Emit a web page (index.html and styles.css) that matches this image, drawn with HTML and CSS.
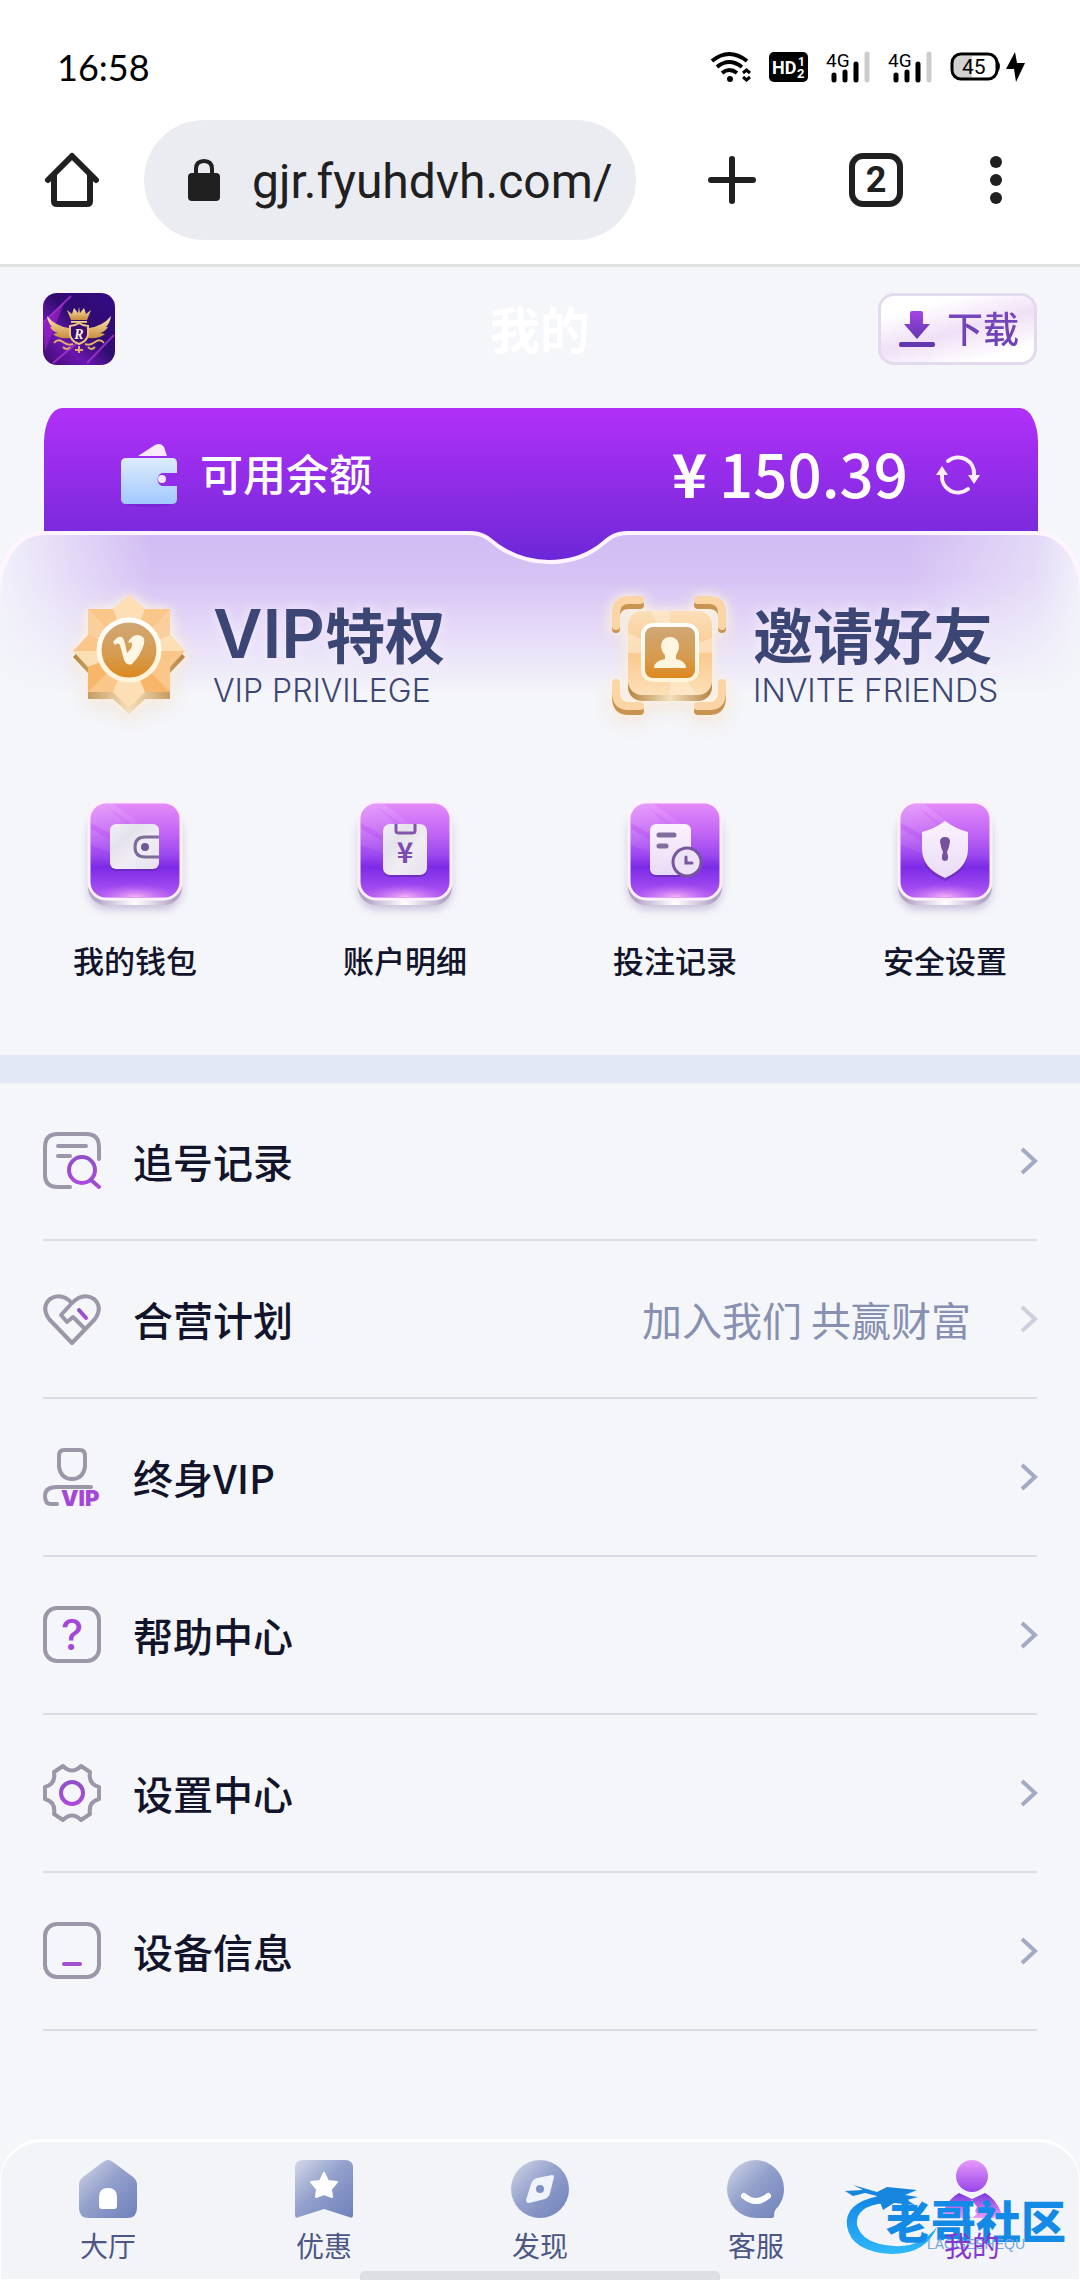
FILE: index.html
```html
<!DOCTYPE html>
<html lang="zh-CN">
<head>
<meta charset="utf-8">
<meta name="viewport" content="width=device-width, initial-scale=1">
<title>我的</title>
<link rel="stylesheet" href="styles.css">
</head>
<body>
<svg class="defs" aria-hidden="true">
  <defs>
    <linearGradient id="tileFill" x1="0" y1="0" x2="0" y2="1">
      <stop offset="0" stop-color="#e58cfa"/><stop offset=".3" stop-color="#c468f5"/><stop offset=".55" stop-color="#9c48f0"/><stop offset=".67" stop-color="#7c2ae6"/><stop offset=".82" stop-color="#9440ee"/><stop offset="1" stop-color="#b55cf3"/>
    </linearGradient>
    <radialGradient id="tileGlow" cx=".5" cy="1" r=".5" gradientTransform="translate(0 .4) scale(1 .6)">
      <stop offset="0" stop-color="#f6b4f4"/><stop offset="1" stop-color="#c76df5" stop-opacity="0"/>
    </radialGradient>
    <linearGradient id="tileEdge"><stop offset=".08" stop-color="#b3a4c6"/><stop offset=".5" stop-color="#fff"/><stop offset=".92" stop-color="#b3a4c6"/></linearGradient>
    <linearGradient id="tileSheen" x1="0" y1="0" x2="1" y2="1"><stop offset="0" stop-color="#fff" stop-opacity=".3"/><stop offset=".6" stop-color="#fff" stop-opacity="0"/></linearGradient>
    <linearGradient id="glyphFill" x1="0" y1="0" x2="1" y2="1"><stop offset="0" stop-color="#f1effa"/><stop offset=".3" stop-color="#e4e2ea"/><stop offset=".6" stop-color="#f1edf4"/><stop offset="1" stop-color="#e4dfec"/></linearGradient>
    <linearGradient id="glyphSoft" x1="0" y1="0" x2="0" y2="1"><stop offset="0" stop-color="#fbf2fd"/><stop offset="1" stop-color="#e9dbf5"/></linearGradient>
    <filter id="soft" x="-30%" y="-30%" width="160%" height="160%"><feGaussianBlur stdDeviation="5"/></filter>
    <g id="tile">
      <rect x="9" y="20" width="92" height="96" rx="18" fill="#9481b8" opacity=".5" filter="url(#soft)"/>
      <rect x="8" y="14" width="94" height="98" rx="18" fill="url(#tileEdge)"/>
      <rect x="9" y="9" width="92" height="97" rx="17" fill="url(#tileFill)" stroke="#fff0fd" stroke-width="3"/>
      <path d="M11 25 Q11 11 25 11 H34 L100 60 V66 L24 11 L100 80 L11 30Z M11 36 L90 82 L11 52Z" fill="url(#tileSheen)" opacity=".6"/>
      <rect x="11" y="60" width="88" height="44" rx="15" fill="url(#tileGlow)"/>
    </g>
    <linearGradient id="line" x1="0" y1="0" x2="0" y2="1"><stop offset="0" stop-color="#9150c8"/><stop offset="1" stop-color="#ad49dd"/></linearGradient>
    <linearGradient id="tab" x1="0" y1="0" x2="1" y2="1"><stop offset="0" stop-color="#d4d8e8"/><stop offset=".45" stop-color="#94a1cc"/><stop offset="1" stop-color="#6d80ba"/></linearGradient>
    <linearGradient id="head" x1="0" y1="0" x2="0" y2="1"><stop offset="0" stop-color="#e69af9"/><stop offset="1" stop-color="#9945ec"/></linearGradient>
    <linearGradient id="bodyFill" x1="0" y1="0" x2="0" y2="1"><stop offset="0" stop-color="#7a35df"/><stop offset="1" stop-color="#ee9bf5"/></linearGradient>
    <linearGradient id="gold" x1="0" y1="0" x2="0" y2="1"><stop offset="0" stop-color="#fbdfb8"/><stop offset=".5" stop-color="#fac98e"/><stop offset="1" stop-color="#fde0b8"/></linearGradient>
    <linearGradient id="goldDeep" x1="0" y1="0" x2="0" y2="1"><stop offset="0" stop-color="#cfa878"/><stop offset=".6" stop-color="#d69b4e"/><stop offset="1" stop-color="#de8619"/></linearGradient>
    <linearGradient id="goldSide"><stop offset="0" stop-color="#b5833f"/><stop offset=".5" stop-color="#f3dfbd"/><stop offset="1" stop-color="#b5833f"/></linearGradient>
    <linearGradient id="ring" x1="0" y1="0" x2="0" y2="1"><stop offset="0" stop-color="#fff"/><stop offset="1" stop-color="#fff3d8"/></linearGradient>
  </defs>
</svg>

<header class="browser">
  <div class="status">
    <time>16:58</time>
    <div class="status-icons">
      <svg width="40" height="30" viewBox="0 0 40 30" fill="none" stroke="#000" stroke-width="4"><path d="M1 9 Q18 -5 36 9 M6 15 Q18 5 31 15 M11 21 Q18 15 26 21"/><circle cx="19" cy="27" r="3" fill="#000" stroke="none"/><path d="M32 21 l3.500-3 3.500 3 M32 25 l3.500 3 3.500-3" stroke-width="3"/></svg>
      <svg width="39" height="30" viewBox="0 0 39 30"><rect width="39" height="30" rx="5"/><g fill="#fff" font-family="Roboto, sans-serif" font-weight="700"><text x="3" y="22" font-size="18">HD</text><text x="29" y="14" font-size="12">1</text><text x="28" y="26" font-size="13">2</text></g></svg>
      <svg width="44" height="30" viewBox="0 0 44 30"><text x="0" y="15" font-size="19" font-family="Roboto, sans-serif">4G</text><path d="M8 23v5 M19 20v8 M30 12v16" stroke="#000" stroke-width="5" stroke-linecap="round"/><path d="M41 2v26" stroke="#ccc" stroke-width="5" stroke-linecap="round"/></svg>
      <svg width="44" height="30" viewBox="0 0 44 30"><text x="0" y="15" font-size="19" font-family="Roboto, sans-serif">4G</text><path d="M8 23v5 M19 20v8 M30 12v16" stroke="#000" stroke-width="5" stroke-linecap="round"/><path d="M41 2v26" stroke="#ccc" stroke-width="5" stroke-linecap="round"/></svg>
      <svg width="75" height="30" viewBox="0 0 75 30"><path d="M22 4 H10 Q3 4 3 14 Q3 26 10 26 H22Z" fill="#d2d2d2"/><rect x="2" y="2" width="45" height="25" rx="9" fill="none" stroke="#000" stroke-width="3"/><path d="M48 9 Q52 14 48 20Z"/><text x="12" y="22" font-size="21" font-family="Roboto, sans-serif">45</text><path d="M65 0 L56 17 H64 L66 30 L75 11 H67Z"/></svg>
    </div>
  </div>
  <div class="toolbar">
    <button class="tool" aria-label="主页"><svg width="54" height="54" viewBox="0 0 54 54" fill="none" stroke="#202020" stroke-width="6" stroke-linecap="round" stroke-linejoin="round"><path d="M3 27 L27 3 L51 27 M9 22 V48 Q9 51 12 51 H42 Q45 51 45 48 V22"/></svg></button>
    <label class="address">
      <svg width="32" height="42" viewBox="0 0 32 42"><rect y="14" width="32" height="28" rx="4" fill="#202020"/><path d="M8 16 V10 Q8 2 16 2 T24 10 V16" fill="none" stroke="#202020" stroke-width="4"/></svg>
      <input type="text" value="gjr.fyuhdvh.com/" aria-label="网址">
    </label>
    <button class="tool tool-new" aria-label="新标签页"><svg width="54" height="54" viewBox="0 0 54 54" stroke="#202020" stroke-width="6" stroke-linecap="round"><path d="M27 6V48 M6 27H48"/></svg></button>
    <button class="tool tool-tabs" aria-label="标签页">2</button>
    <button class="tool tool-menu" aria-label="菜单"><svg width="54" height="54" viewBox="0 0 54 54" fill="#202020"><circle cx="27" cy="9" r="6"/><circle cx="27" cy="27" r="6"/><circle cx="27" cy="45" r="6"/></svg></button>
  </div>
</header>

<main>
  <div class="heading">
    <a href="#" class="logo" aria-label="首页">
      <svg width="72" height="72" viewBox="0 0 72 72">
        <defs><linearGradient id="lg" x1="0" y1="1" x2="1" y2="0"><stop offset="0" stop-color="#3d0a6b"/><stop offset=".3" stop-color="#6b16b0"/><stop offset=".55" stop-color="#2f0c6e"/><stop offset="1" stop-color="#340a86"/></linearGradient><linearGradient id="au" x1="0" y1="0" x2="0" y2="1"><stop offset="0" stop-color="#fdeab5"/><stop offset="1" stop-color="#c98d3d"/></linearGradient></defs>
        <rect width="72" height="72" rx="14" fill="url(#lg)"/>
        <path d="M0 30 L28 3 M10 70 L34 50 M44 70 L71 42" stroke="#b33be0" stroke-width="2" opacity=".7"/><path d="M0 32 L22 8 L2 58Z" fill="#c22bdd" opacity=".45"/>
        <g fill="url(#au)"><path d="M24 17 l5 4 2-6 4 5 1-6 1 6 4-5 2 6 5-4 -4 10 H28Z"/><path d="M28 28h16v2H28Z"/><path d="M26 35 Q12 33 4 23 Q5 30 9 34 L7 34 Q10 39 15 40 L10 41 Q15 46 27 45Z M46 35 Q60 33 68 23 Q67 30 63 34 L65 34 Q62 39 57 40 L62 41 Q57 46 45 45Z"/></g>
        <path d="M27 33 Q32 33 36 30 Q40 33 45 33 V42 Q44 48 36 51 Q28 48 27 42Z" fill="#3b0b78" stroke="#edc780" stroke-width="2"/>
        <text x="36" y="46" text-anchor="middle" font-family="'Liberation Serif', serif" font-style="italic" font-weight="700" font-size="14" fill="#fff2d2">R</text>
        <path d="M11 50 Q15 45 20 49 T30 51 M61 50 Q57 45 52 49 T42 51 M20 54 Q24 58 27 54 M52 54 Q48 58 45 54 M36 53 V60 M32 57 H40" fill="none" stroke="#e0b06a" stroke-width="2"/>
      </svg>
    </a>
    <h1>我的</h1>
    <button class="download">
      <svg width="36" height="36" viewBox="0 0 36 36"><defs><linearGradient id="dl" x1="0" y1="0" x2="0" y2="1"><stop offset="0" stop-color="#a643e6"/><stop offset="1" stop-color="#6138b0"/></linearGradient></defs><path d="M13 0 H22 Q24 0 24 2 V13 H31 L18 28 L5 13 H11 V2 Q11 0 13 0Z" fill="url(#dl)"/><rect y="31" width="36" height="5" rx="2" fill="#6138b0"/></svg>
      <span>下载</span>
    </button>
  </div>

  <section class="balance">
    <svg width="58" height="64" viewBox="0 0 58 64"><defs><linearGradient id="wl" x1="0" y1="0" x2="0" y2="1"><stop offset="0" stop-color="#dcebfb"/><stop offset="1" stop-color="#a1c9ff"/></linearGradient></defs><ellipse cx="29" cy="60" rx="25" ry="4" fill="#641fc0" opacity=".4"/><path d="M18 13 L35 2 Q41 -1 44 4 L47 13Z" fill="#fbe9fb"/><path d="M6 15 H52 Q57 15 57 20 V30 H42 A7 7 0 0 0 42 43 H57 V56 Q57 61 52 61 H6 Q1 61 1 56 V20 Q1 15 6 15Z" fill="url(#wl)"/><circle cx="42" cy="36" r="4" fill="#f4eaff"/></svg>
    <span class="balance-label">可用余额</span>
    <strong class="amount"><span class="currency">¥</span><span>150.39</span></strong>
    <button class="refresh" aria-label="刷新余额"><svg width="44" height="40" viewBox="0 0 44 40" fill="none" stroke="#fff0fb" stroke-width="4" stroke-linecap="round"><path d="M12 6 A16 16 0 0 1 38 20"/><path d="M32 34 A16 16 0 0 1 6 20"/><path d="M32 20 H44 L38 29Z M0 20 H12 L6 11Z" fill="#fff0fb" stroke="none"/></svg></button>
  </section>

  <section class="perks">
    <svg class="perks-bg" viewBox="0 0 1080 220" preserveAspectRatio="none" aria-hidden="true">
      <defs>
        <linearGradient id="pv" x1="0" y1="0" x2="0" y2="220" gradientUnits="userSpaceOnUse"><stop offset="0" stop-color="#d1bbf3"/><stop offset=".22" stop-color="#d7c3f5"/><stop offset=".45" stop-color="#e5daf8"/><stop offset=".75" stop-color="#f5f6fa"/></linearGradient>
        <linearGradient id="ph"><stop offset="0" stop-color="#f4f6fa" stop-opacity=".9"/><stop offset=".04" stop-color="#f4f6fa" stop-opacity=".65"/><stop offset=".14" stop-color="#f4f6fa" stop-opacity="0"/><stop offset=".84" stop-color="#f4f6fa" stop-opacity="0"/><stop offset=".96" stop-color="#f4f6fa" stop-opacity=".5"/><stop offset="1" stop-color="#f4f6fa" stop-opacity=".9"/></linearGradient>
        <linearGradient id="ps" x1="0" y1="0" x2="0" y2="70" gradientUnits="userSpaceOnUse"><stop offset=".5" stop-color="#fff4ff"/><stop offset="1" stop-color="#fff" stop-opacity="0"/></linearGradient>
        <path id="card" d="M0 46 C6 20 22 2 44 2 H470 C486 2 490 10 501 17 C515 26 530 31 549 31 C568 31 584 26 597 17 C608 9 612 2 628 2 H1036 C1058 2 1074 20 1080 46 V220 H0Z"/>
      </defs>
      <use href="#card" fill="url(#pv)"/><use href="#card" fill="url(#ph)"/><use href="#card" fill="none" stroke="url(#ps)" stroke-width="4"/>
    </svg>
    <a href="#" class="perk">
      <svg width="116" height="124" viewBox="0 0 116 124">
        <path d="M58 9 74 23 99 23 99 48 114 64 99 80 99 106 74 106 58 121 42 106 17 106 17 80 2 64 17 48 17 23 42 23Z" fill="url(#goldSide)"/>
        <path d="M58 2 74 16 99 16 99 42 114 58 99 74 99 99 74 99 58 115 42 99 17 99 17 74 2 58 17 42 17 16 42 16Z" fill="#fac68a"/>
        <path d="M58 2 74 16 58 58 42 16Z M114 58 99 42 58 58Z M2 58 17 74 58 58Z M58 115 74 99 58 58 42 99Z" fill="#fddfb5"/>
        <path d="M99 16V42L58 58Z M17 16V42L58 58Z" fill="#fbcf9b"/>
        <path d="M17 99V74L58 58Z M99 99H74L58 58Z" fill="#f8b66a"/>
        <circle cx="58" cy="57" r="30" fill="url(#goldDeep)" stroke="url(#ring)" stroke-width="5"/>
        <path d="M42 49 Q48 41 52 45 Q54 49 56 60 Q62 54 61 51 Q61 48 57 50 Q60 42 67 42 Q75 43 73 51 Q70 62 61 71 Q56 73 53 67 L49 52 Q47 49 44 52Z" fill="#fff6e3"/>
      </svg>
      <span class="perk-text"><b><span class="latin">VIP</span>特权</b><small>VIP PRIVILEGE</small></span>
    </a>
    <a href="#" class="perk">
      <svg width="116" height="124" viewBox="0 0 116 124">
        <g fill="none" stroke-width="8" stroke-linecap="round"><path d="M5 36 V24 Q5 12 18 12 H29 M111 36 V24 Q111 12 98 12 H87 M5 94 V104 Q5 118 18 118 H29 M111 94 V104 Q111 118 98 118 H87" stroke="#c89450"/><path d="M5 33 V20 Q5 7 18 7 H29 M111 33 V20 Q111 7 98 7 H87 M5 90 V99 Q5 113 18 113 H29 M111 90 V99 Q111 113 98 113 H87" stroke="#fcd5a6"/></g>
        <rect x="17" y="24" width="84" height="84" rx="14" fill="url(#goldSide)"/><rect x="17" y="18" width="84" height="84" rx="14" fill="url(#gold)"/>
        <path d="M59 60 L40 18 H59Z M59 60 L101 45 V60Z M59 60 V102 H85Z M59 60 H17 V40Z" fill="#fdebd2" opacity=".6"/>
        <rect x="32" y="32" width="54" height="55" rx="10" fill="url(#goldDeep)" stroke="url(#ring)" stroke-width="4"/>
        <path d="M59 44 C69 44 70 56 65 62 V66 Q75 68 75 75 H43 Q43 68 54 66 V62 C48 56 49 44 59 44Z" fill="#fff6e0"/>
      </svg>
      <span class="perk-text"><b>邀请好友</b><small>INVITE FRIENDS</small></span>
    </a>
  </section>

  <nav class="shortcuts">
    <a href="#"><svg width="110" height="130" viewBox="0 0 110 130"><use href="#tile"/><rect x="30" y="33" width="49" height="45" rx="6" fill="#5b2a9c" opacity=".6"/><rect x="30" y="31" width="49" height="45" rx="6" fill="url(#glyphFill)"/><path d="M79 44 H65 Q55 44 55 54 T65 64 H79" fill="none" stroke="#7e6b98" stroke-width="3"/><circle cx="65" cy="54" r="4" fill="#6f5793"/></svg><span>我的钱包</span></a>
    <a href="#"><svg width="110" height="130" viewBox="0 0 110 130"><use href="#tile"/><rect x="33" y="34" width="44" height="50" rx="7" fill="#5b2a9c" opacity=".6"/><rect x="33" y="31" width="44" height="51" rx="7" fill="url(#glyphFill)"/><path d="M46 31 V38 Q46 40 49 40 H62 Q65 40 65 38 V31" fill="none" stroke="#8355ad" stroke-width="3"/><text x="55" y="70" text-anchor="middle" font-family="'Noto Sans CJK SC', sans-serif" font-weight="700" font-size="28" fill="#7c4bb4">¥</text></svg><span>账户明细</span></a>
    <a href="#"><svg width="110" height="130" viewBox="0 0 110 130"><use href="#tile"/><rect x="30" y="33" width="41" height="51" rx="6" fill="#5b2a9c" opacity=".6"/><rect x="30" y="31" width="41" height="51" rx="6" fill="url(#glyphSoft)"/><path d="M39 42 H54 M39 53 H46" stroke="#826d9e" stroke-width="5" stroke-linecap="round"/><circle cx="67" cy="69" r="14" fill="#eee2f7" stroke="#78559f" stroke-width="3"/><path d="M66 64 V70 H72" fill="none" stroke="#78559f" stroke-width="3" stroke-linecap="round"/></svg><span>投注记录</span></a>
    <a href="#"><svg width="110" height="130" viewBox="0 0 110 130"><use href="#tile"/><path d="M55 31 Q66 39 78 42 V58 Q78 78 55 88 Q32 78 32 58 V42 Q44 39 55 31Z" fill="#5b2a9c" opacity=".5"/><path d="M55 28 Q66 36 78 39 V56 Q78 75 55 85 Q32 75 32 56 V39 Q44 36 55 28Z" fill="url(#glyphSoft)"/><path d="M55 44 Q60 44 60 49 Q59 55 57 59 Q60 68 55 68 T53 59 Q51 55 50 49 Q50 44 55 44Z" fill="#76529e"/></svg><span>安全设置</span></a>
  </nav>

  <ul class="menu">
    <li><a href="#"><svg class="icon" viewBox="0 0 58 58"><path d="M56 27 V15 Q56 2 43 2 H15 Q2 2 2 15 V43 Q2 55 15 55 H27 M15 14 H43 M15 24 H27"/><g class="accent"><circle cx="39" cy="38" r="13"/><path d="M48 48 L56 55"/></g></svg><span>追号记录</span><svg class="arrow" viewBox="0 0 18 28"><path d="M3 2 L16 14 L3 26"/></svg></a></li>
    <li><a href="#"><svg class="icon" viewBox="0 0 58 58"><path d="M29 53 L6 29 Q-2 17 7 9 Q18 2 29 13 Q40 2 51 9 Q60 17 52 29Z M29 13 L18 25 L24 32 L30 27 L41 38"/><path class="accent" d="M36 20 L43 28"/></svg><span>合营计划</span><em>加入我们 共赢财富</em><svg class="arrow arrow-pale" viewBox="0 0 18 28"><path d="M3 2 L16 14 L3 26"/></svg></a></li>
    <li><a href="#"><svg class="icon" viewBox="0 0 58 58"><path d="M21 2 H37 Q42 2 42 8 V19 Q40 31 29 31 T16 19 V8 Q16 2 21 2Z M48 39 H14 Q2 39 2 48 Q2 56 8 56 H14"/><text class="icon-text" x="18" y="58" font-size="22">VIP</text></svg><span>终身VIP</span><svg class="arrow" viewBox="0 0 18 28"><path d="M3 2 L16 14 L3 26"/></svg></a></li>
    <li><a href="#"><svg class="icon" viewBox="0 0 58 58"><rect x="2" y="2" width="54" height="53" rx="12"/><text class="icon-text mark" x="29" y="44" font-size="42" text-anchor="middle">?</text></svg><span>帮助中心</span><svg class="arrow" viewBox="0 0 18 28"><path d="M3 2 L16 14 L3 26"/></svg></a></li>
    <li><a href="#"><svg class="icon" viewBox="0 0 58 58"><path d="M20 2 Q29 11 38 2 L47 8 Q45 20 56 23 V35 Q45 38 47 50 L38 56 Q29 47 20 56 L11 50 Q13 38 2 35 V23 Q13 20 11 8Z"/><circle class="accent" cx="29" cy="29" r="11"/></svg><span>设置中心</span><svg class="arrow" viewBox="0 0 18 28"><path d="M3 2 L16 14 L3 26"/></svg></a></li>
    <li><a href="#"><svg class="icon" viewBox="0 0 58 58"><rect x="2" y="2" width="54" height="53" rx="12"/><path class="accent accent-flat" d="M21 42 H37"/></svg><span>设备信息</span><svg class="arrow" viewBox="0 0 18 28"><path d="M3 2 L16 14 L3 26"/></svg></a></li>
  </ul>
</main>

<nav class="tabs">
  <a href="#"><svg width="58" height="58" viewBox="0 0 58 58"><path d="M24 2 Q29 -2 34 2 L54 17 Q58 20 58 25 V48 Q58 58 48 58 H10 Q0 58 0 48 V25 Q0 20 4 17Z" fill="url(#tab)"/><path d="M20 37 Q20 28 29 28 T38 37 V46 Q38 49 35 49 H23 Q20 49 20 46Z" fill="#fff"/></svg><span>大厅</span></a>
  <a href="#"><svg width="58" height="58" viewBox="0 0 58 58"><path d="M8 0 H50 Q58 0 58 8 V55 Q58 59 54 57 L29 49 L4 57 Q0 59 0 55 V8 Q0 0 8 0Z" fill="url(#tab)"/><path d="M29 13 L33 21 L42 22 L36 29 L37 37 L29 34 L21 37 L22 29 L16 22 L25 21Z" fill="#fff" stroke="#fff" stroke-width="2" stroke-linejoin="round"/></svg><span>优惠</span></a>
  <a href="#"><svg width="58" height="58" viewBox="0 0 58 58"><circle cx="29" cy="29" r="29" fill="url(#tab)"/><path d="M26 18 L41 15 Q43 15 43 17 L39 33 Q38 37 34 39 L18 43 Q15 43 15 40 L20 24 Q22 19 26 18Z" fill="#f1f3fb"/><circle cx="29" cy="29" r="4" fill="#8090c2"/></svg><span>发现</span></a>
  <a href="#"><svg width="58" height="58" viewBox="0 0 58 58"><path d="M29 0 A29 29 0 0 1 49 49 Q47 51 47 57 L45 58 H29 A29 29 0 0 1 29 0Z" fill="url(#tab)"/><path d="M17 36 Q29 46 41 36" fill="none" stroke="#fff" stroke-width="6" stroke-linecap="round"/></svg><span>客服</span></a>
  <a href="#" class="current">
    <svg width="58" height="58" viewBox="0 0 58 58"><circle cx="29" cy="16" r="16" fill="url(#head)"/><path d="M0 52 Q6 38 16 33 L29 39 L42 33 Q52 38 58 52 Q55 58 48 58 H10 Q3 58 0 52Z" fill="url(#bodyFill)"/><path d="M29 40 L34 47 L32 51 L34 54 L29 58 L24 54 L27 50 L24 47Z" fill="#fff"/></svg>
    <div class="stamp">
      <svg width="94" height="74" viewBox="0 0 94 74" fill="none"><defs><linearGradient id="dr" x1="0" y1="0" x2="0" y2="1"><stop offset="0" stop-color="#1186e4"/><stop offset="1" stop-color="#2eb8fa"/></linearGradient></defs><path d="M34 13 Q-1 20 2 43 Q6 69 47 71 Q81 71 92 44 Q75 65 49 63 Q17 61 12 42 Q10 23 40 20Z" fill="url(#dr)"/><path d="M0 8 L18 7 L8 2 L32 9 L42 4 L72 7 L60 12 L73 14 L62 17 L70 22 L49 20 L38 27 L35 19 L28 22 L32 13 L20 10 L8 13Z" fill="#1685dd"/></svg>
      <div class="stamp-text"><strong>老哥社区</strong><small>LAOGESHEQU</small></div>
    </div>
    <span>我的</span>
  </a>
  <i class="handle"></i>
</nav>
</body>
</html>
```
FILE: styles.css
```css
* {
  box-sizing: border-box;
}

body {
  margin: 0;
  min-height: 100vh;
  display: flex;
  flex-direction: column;
  background: #f5f6fa;
  color: #11142a;
  font-family: "Noto Sans CJK SC", sans-serif;
  font-size: 40px;
}

a {
  color: inherit;
  text-decoration: none;
}

button {
  padding: 0;
  border: 0;
  background: none;
  color: inherit;
  font: inherit;
}

svg {
  display: block;
  flex: none;
  overflow: visible;
}

.defs {
  position: absolute;
  width: 0;
  height: 0;
}

/* Browser chrome */
.browser {
  background: #fff;
  border-bottom: 3px solid #e1e1e1;
}

.status {
  display: flex;
  justify-content: space-between;
  align-items: center;
  height: 120px;
  padding: 14px 55px 0 57px;
  color: #000;
  font: 36px/40px Lato, sans-serif;
}

.status-icons {
  display: flex;
  gap: 18px;
}

.toolbar {
  display: flex;
  align-items: center;
  padding: 0 57px 24px 45px;
}

.tool {
  flex: none;
  width: 54px;
  height: 54px;
}

.address {
  flex: 1;
  min-width: 0;
  display: flex;
  align-items: center;
  gap: 32px;
  height: 120px;
  margin-left: 45px;
  padding: 0 16px 0 44px;
  border-radius: 60px;
  background: #ebecf1;
}

.address input {
  flex: 1;
  min-width: 0;
  padding: 4px 0 0;
  border: 0;
  outline: 0;
  background: none;
  color: #202020;
  font: 48px/60px Roboto, sans-serif;
}

.tool-new {
  margin-left: 69px;
}

.tool-tabs {
  margin-left: 90px;
  border: 6px solid #202020;
  border-radius: 14px;
  color: #202020;
  font: 700 36px/42px Roboto, sans-serif;
}

.tool-menu {
  margin-left: 66px;
}

/* Page heading */
.heading {
  display: grid;
  grid-template-columns: 1fr auto 1fr;
  align-items: center;
  padding: 26px 43px 43px;
}

.logo {
  justify-self: start;
}

h1 {
  margin: 0;
  color: #fff;
  font-size: 50px;
  line-height: 68px;
  padding-bottom: 4px;
}

.download {
  justify-self: end;
  display: flex;
  align-items: center;
  gap: 12px;
  height: 72px;
  padding: 0 15px 0 18px;
  border: 3px solid #e4daee;
  border-radius: 16px;
  background: linear-gradient(165deg, #fff 20%, #f0e0f7 52%, #fff 85%);
  font-size: 36px;
  font-weight: 500;
  line-height: 54px;
}

.download span {
  padding-bottom: 4px;
  background: linear-gradient(#7a4ac0, #6a3fae);
  background-clip: text;
  color: transparent;
}

/* Balance */
.balance {
  display: flex;
  align-items: center;
  height: 162px;
  margin: 0 42px 0 44px;
  padding: 0 58px 28px 76px;
  border-radius: 18px 18px 0 0 / 34px 34px 0 0;
  background: linear-gradient(#b130f8, #7c2add 75%, #6426d6);
  color: #fff;
}

.balance-label {
  margin-left: 22px;
  padding-bottom: 6px;
  font-size: 43px;
  font-weight: 500;
  line-height: 60px;
}

.amount {
  display: flex;
  gap: 12px;
  margin-left: auto;
  padding-bottom: 6px;
  font-size: 60px;
  font-weight: 500;
  line-height: 80px;
}

.currency {
  font-weight: 700;
}

.refresh {
  margin-left: 28px;
}

/* VIP and invite card */
.perks {
  position: relative;
  display: grid;
  grid-template-columns: 1fr 1fr;
  height: 220px;
  margin-top: -39px;
}

.perks-bg {
  position: absolute;
  inset: 0;
  width: 100%;
  height: 100%;
}

.perk {
  position: relative;
  display: flex;
  align-items: flex-start;
  gap: 26px;
  padding: 62px 0 0 71px;
  color: #3b4674;
  white-space: nowrap;
}

.perk > svg {
  filter: drop-shadow(0 0 6px #fff6e8) drop-shadow(0 6px 8px #efe4da);
}

.perk-text {
  display: flex;
  flex-direction: column;
}

.perk-text b {
  display: flex;
  align-items: center;
  font-size: 60px;
  line-height: 80px;
  text-shadow: 0 0 12px #f8efff;
}

.perk-text .latin {
  font-family: Inter, sans-serif;
  font-size: 68px;
  font-weight: 600;
}

.perk-text small {
  font: 300 32px/36px Inter, sans-serif;
}

/* Shortcuts */
.shortcuts {
  display: grid;
  grid-template-columns: repeat(4, 1fr);
  padding: 42px 0 73px;
}

.shortcuts a {
  display: flex;
  flex-direction: column;
  align-items: center;
  gap: 15px;
  font-size: 31px;
  font-weight: 500;
  line-height: 44px;
}

/* Menu list */
.menu {
  margin: 0;
  padding: 0 43px;
  border-top: 28px solid #e2e8f5;
  list-style: none;
}

.menu a {
  display: flex;
  align-items: center;
  gap: 32px;
  height: 158px;
  border-bottom: 2px solid #d9dce5;
  line-height: 60px;
  font-weight: 500;
}

.menu em {
  margin-left: auto;
  margin-right: 16px;
  color: #8790b0;
  font-style: normal;
  font-weight: 400;
}

.icon {
  width: 58px;
  height: 58px;
  fill: none;
  stroke: #9c96a9;
  stroke-width: 4;
  stroke-linecap: round;
  stroke-linejoin: round;
}

.icon .accent {
  stroke: url(#line);
}

.icon .accent-flat {
  stroke: #a24fd3;
}

.icon-text {
  fill: #a447d8;
  stroke: none;
  font-family: Inter, sans-serif;
  font-weight: 900;
}

.icon-text.mark {
  font-weight: 500;
}

.arrow {
  width: 18px;
  height: 28px;
  fill: none;
  stroke: #a3aac4;
  stroke-width: 4;
}

.menu span + .arrow {
  margin-left: auto;
}

.arrow-pale {
  stroke: #ccd0dc;
}

/* Bottom tab bar */
.tabs {
  position: relative;
  display: grid;
  grid-template-columns: repeat(5, 1fr);
  height: 141px;
  margin-top: auto;
  padding-top: 21px;
  border-radius: 42px 42px 0 0;
  background: #f3f4f8;
  box-shadow: inset 0 3px 0 #fff, inset 0 0 0 1px #fff;
}

.tabs a {
  position: relative;
  display: flex;
  flex-direction: column;
  align-items: center;
  gap: 7px;
  color: #4c5785;
  font-size: 28px;
  line-height: 40px;
}

.tabs a > span {
  position: relative;
}

.tabs .current {
  color: #8438d2;
}

.stamp {
  position: absolute;
  top: 23px;
  right: 14px;
  display: flex;
  white-space: nowrap;
}

.stamp-text {
  display: flex;
  flex-direction: column;
  align-items: center;
  margin-left: -53px;
  padding-top: 20px;
}

.stamp strong {
  color: #138be6;
  font-size: 45px;
  font-weight: 900;
  line-height: 34px;
}

.stamp small {
  color: #72a8de;
  font: 14px/14px "Liberation Sans", sans-serif;
}

.handle {
  position: absolute;
  bottom: 0;
  left: 50%;
  width: 360px;
  height: 9px;
  margin-left: -180px;
  border-radius: 5px 5px 0 0;
  background: #dddfe3;
}
```
